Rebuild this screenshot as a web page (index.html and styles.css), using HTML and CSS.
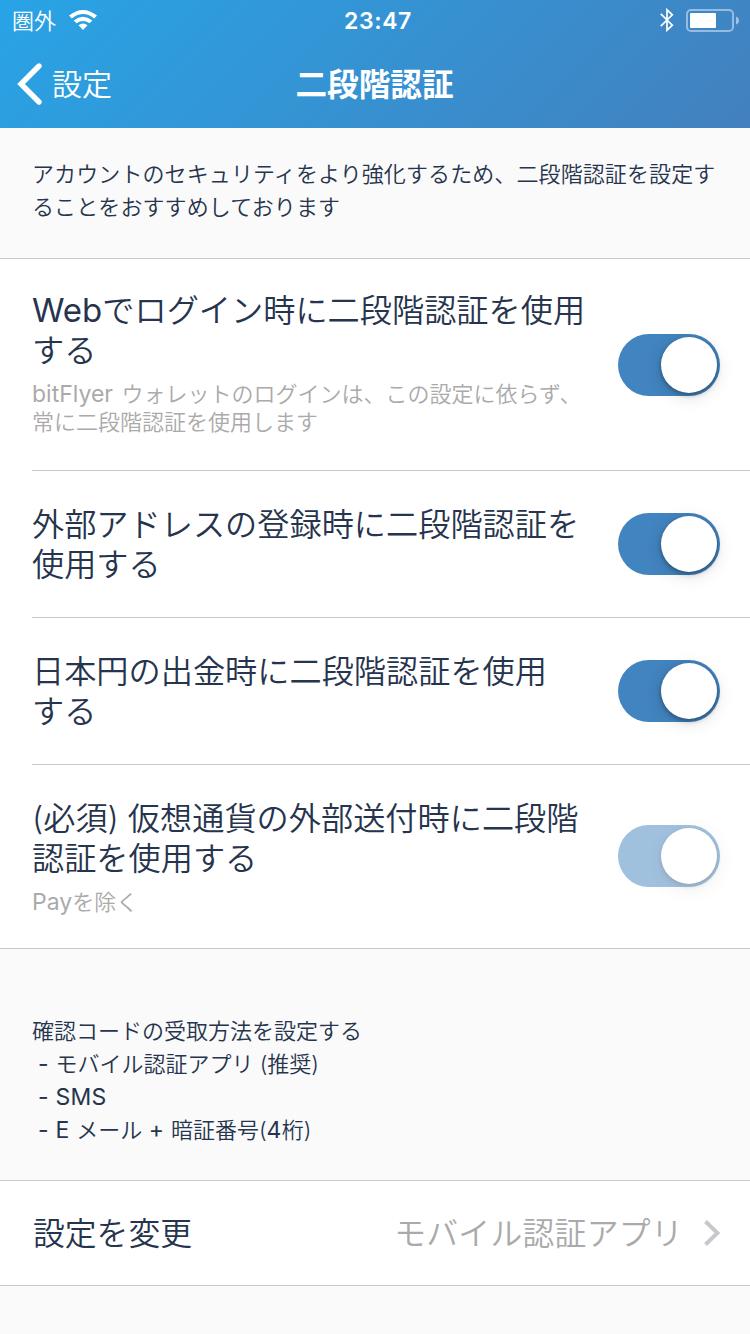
FILE: index.html
```
<!DOCTYPE html>
<html lang="ja">

<head>
  <meta charset="UTF-8">
  <meta name="viewport" content="width=device-width, initial-scale=1.0">
  <title>二段階認証</title>
  <link rel="stylesheet" href="styles.css">
</head>

<body>
  <header class="header">
    <div class="status">
      <div class="status-left">
        <span class="carrier">圏外</span>
        <svg class="wifi" width="28" height="20" viewBox="0 0 28 20">
          <path d="M0 5.6Q14 -5.6 28 5.6L25.2 8.4Q14 -0.2 2.8 8.4Z" fill="#fff"/>
          <path d="M4.7 10.4Q14 3 23.3 10.4L20.5 13.2Q14 8.6 7.5 13.2Z" fill="#fff"/>
          <path d="M9.5 15.2Q14 11.6 18.5 15.2L14 20Z" fill="#fff"/>
        </svg>
      </div>
      <span class="time">23:47</span>
      <div class="status-right">
        <svg class="bluetooth" width="14" height="24" viewBox="0 0 14 24">
          <path d="M.8 5.8L12.3 17.2L7 22.2V1.8L12.3 6.8L.8 18.2" fill="none" stroke="#fff" stroke-width="1.7"/>
        </svg>
        <svg class="battery" width="54" height="24" viewBox="0 0 54 24">
          <rect x="1" y="1" width="46" height="21" rx="4" fill="none" stroke="#fff" stroke-opacity=".45" stroke-width="2"/>
          <rect x="4" y="4" width="26" height="15" rx="1" fill="#fff"/>
          <path d="M50 7.5Q53 8.5 53 11.5T50 15.5Z" fill="#fff" fill-opacity=".5"/>
        </svg>
      </div>
    </div>
    <div class="nav">
      <a class="back" href="#">
        <svg width="26" height="42" viewBox="0 0 26 42">
          <path d="M22 3L4 21L22 39" fill="none" stroke="#fff" stroke-width="5.4" stroke-linecap="round"/>
        </svg>
        <span class="back-label">設定</span>
      </a>
      <h1 class="nav-title">二段階認証</h1>
    </div>
  </header>

  <p class="note intro">アカウントのセキュリティをより強化するため、二段階認証を設定す<br>ることをおすすめしております</p>

  <ul class="list">
    <li class="row first">
      <div class="text">
        <p class="label"><span class="latin">Web</span>でログイン時に二段階認証を使用<br>する</p>
        <p class="desc"><span class="latin">bitFlyer </span>ウォレットのログインは、この設定に依らず、<br>常に二段階認証を使用します</p>
      </div>
      <div class="switch"></div>
    </li>
    <li class="row">
      <div class="text">
        <p class="label">外部アドレスの登録時に二段階認証を<br>使用する</p>
      </div>
      <div class="switch"></div>
    </li>
    <li class="row">
      <div class="text">
        <p class="label">日本円の出金時に二段階認証を使用<br>する</p>
      </div>
      <div class="switch"></div>
    </li>
    <li class="row last">
      <div class="text">
        <p class="label">(必須) 仮想通貨の外部送付時に二段階<br>認証を使用する</p>
        <p class="desc"><span class="latin">Pay</span>を除く</p>
      </div>
      <div class="switch disabled"></div>
    </li>
  </ul>

  <div class="note method">
    <p>確認コードの受取方法を設定する</p>
    <ul class="method-list">
      <li><span class="latin">- </span>モバイル認証アプリ (推奨)</li>
      <li><span class="latin">- SMS</span></li>
      <li><span class="latin">- E </span>メール<span class="latin"> + </span>暗証番号(<span class="latin">4</span>桁)</li>
    </ul>
  </div>

  <a class="change" href="#">
    <span class="change-label">設定を変更</span>
    <span class="change-value">モバイル認証アプリ</span>
    <svg width="16" height="26" viewBox="0 0 16 26">
      <path d="M1.5 1.5L13.5 13L1.5 24.5" fill="none" stroke="#c7c7cc" stroke-width="4"/>
    </svg>
  </a>
</body>

</html>
```
FILE: styles.css
```
* {
  margin: 0;
  padding: 0;
  box-sizing: border-box;
  list-style: none;
}

body {
  width: 750px;
  height: 1334px;
  background: #fafafa;
  color: #26344d;
  font-family: Inter, "Noto Sans CJK JP", sans-serif;
  font-weight: 350;
  font-size: 22px;
  overflow: hidden;
}

a {
  color: inherit;
  text-decoration: none;
}

svg {
  display: block;
  flex: none;
}

.latin {
  font-weight: 400;
}

/* header */
.header {
  height: 128px;
  background: linear-gradient(135deg, #28a4e6 0%, #4380be 100%);
  color: #fff;
}

.status {
  height: 40px;
  display: grid;
  grid-template-columns: 1fr auto 1fr;
  align-items: center;
  padding: 0 10px 0 12px;
}

.status-left {
  display: flex;
  align-items: center;
  gap: 13px;
}

.carrier {
  padding-bottom: 3px;
}

.time {
  padding: 2px 0 0 4px;
  font-size: 23px;
  font-weight: 600;
  letter-spacing: 0.6px;
}

.status-right {
  display: flex;
  align-items: center;
  justify-content: flex-end;
  gap: 12px;
  padding-top: 1px;
}

.bluetooth {
  margin-top: -1px;
}

.nav {
  height: 88px;
  display: grid;
  grid-template-columns: 1fr auto 1fr;
  align-items: center;
  padding: 0 18px 0 17px;
}

.back {
  display: flex;
  align-items: center;
  gap: 9px;
  font-size: 30px;
}

.back-label {
  padding-bottom: 4px;
}

.nav-title {
  padding-bottom: 4px;
  font-size: 31.6px;
  font-weight: 700;
}

/* notes */
.note {
  line-height: 33px;
  padding: 0 32px;
}

.intro {
  height: 130px;
  padding-top: 30px;
  padding-right: 0;
  letter-spacing: 0.1px;
}

.method {
  height: 231px;
  padding-top: 66px;
}

.method-list {
  padding-left: 6px;
}

.method .latin {
  font-size: 23px;
  letter-spacing: 0.2px;
  line-height: 1;
}

/* switch list */
.list {
  background: #fff;
  border-top: 1px solid #c8c7cc;
  border-bottom: 1px solid #c8c7cc;
}

.row {
  display: flex;
  align-items: center;
  margin-left: 32px;
  padding: 34px 30px 32px 0;
  border-bottom: 1px solid #c8c8c8;
}

.row.first {
  padding-top: 32px;
  padding-bottom: 34px;
}

.row.last {
  padding-bottom: 32px;
  border-bottom: 0;
}

.text {
  flex: 1;
  white-space: nowrap;
}

.label {
  font-size: 32.2px;
  line-height: 40px;
}

.label .latin {
  font-size: 33px;
  line-height: 1;
}

.desc {
  margin-top: 9px;
  color: #aaa;
  line-height: 28px;
}

.desc .latin {
  font-size: 23px;
  line-height: 1;
  word-spacing: 2px;
}

.switch {
  flex: none;
  width: 102px;
  height: 62px;
  margin-top: -2px;
  padding: 3px;
  border-radius: 31px;
  background: #4284bf;
}

.row.first .switch {
  margin-top: 2px;
}

.row.last .switch {
  margin-top: -3px;
}

.switch::after {
  content: "";
  display: block;
  width: 56px;
  height: 56px;
  margin-left: auto;
  border-radius: 50%;
  background: #fff;
  box-shadow: 0 2px 5px rgba(0, 0, 0, 0.35), 0 4px 18px rgba(0, 0, 0, 0.12);
}

.switch.disabled {
  opacity: 0.5;
}

/* change link */
.change {
  height: 106px;
  display: flex;
  align-items: center;
  padding: 0 30px 0 33px;
  background: #fff;
  border-top: 1px solid #c8c7cc;
  border-bottom: 1px solid #c8c8c8;
  font-size: 31.8px;
}

.change-label,
.change-value {
  padding-bottom: 5px;
}

.change-value {
  margin-left: auto;
  margin-right: 21px;
  color: #aaa;
  letter-spacing: 0.3px;
}
```
